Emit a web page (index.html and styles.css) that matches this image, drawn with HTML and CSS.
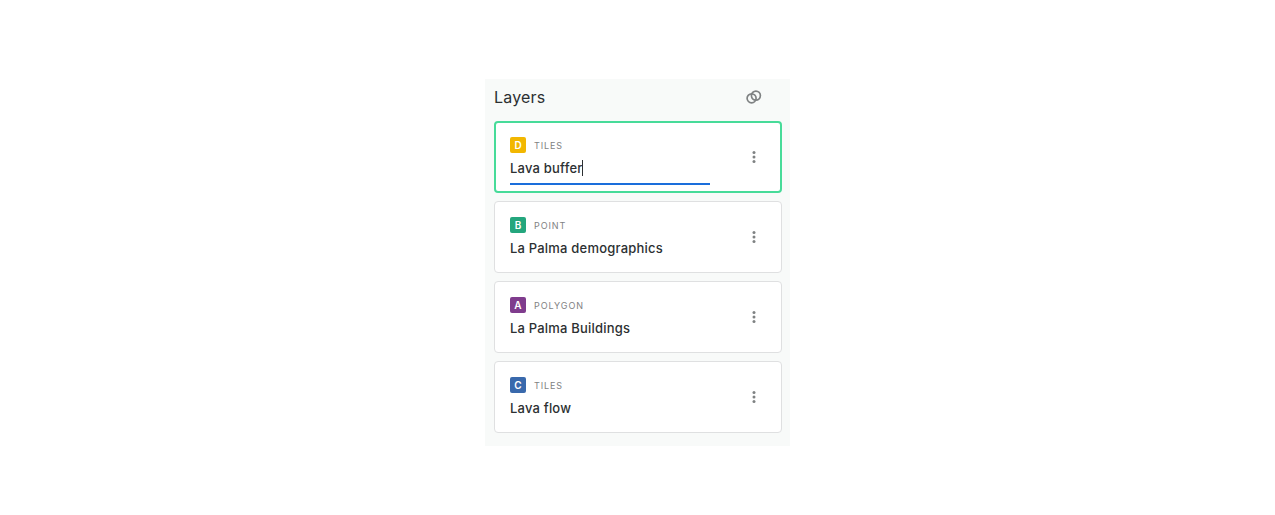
FILE: index.html
```
<!DOCTYPE html>
<html lang="en">
<head>
<meta charset="utf-8">
<title>Layers</title>
<link rel="stylesheet" href="styles.css">
</head>
<body>
<section class="panel">
  <header class="panel-header">
    <h1 class="panel-title">Layers</h1>
    <button class="icon-button" type="button" aria-label="Blending">
      <svg width="16" height="16" viewBox="0 0 16 16" fill="none" stroke="currentColor" stroke-width="1.7"><circle cx="5.6" cy="9.3" r="4.5"/><circle cx="9.9" cy="6.6" r="4.5"/></svg>
    </button>
  </header>
  <ul class="layers">
    <li class="layer layer-active">
      <div class="layer-body">
        <div class="layer-meta"><span class="badge badge-d">D</span><label class="kind" for="layer-name">TILES</label></div>
        <div class="field">
          <input class="name name-input" id="layer-name" type="text" value="Lava buffer">
          <span class="caret" aria-hidden="true"></span>
        </div>
      </div>
      <button class="icon-button" type="button" aria-label="Lava buffer options"><svg width="16" height="16" viewBox="0 0 16 16" fill="currentColor"><circle cx="8" cy="3.6" r="1.5"/><circle cx="8" cy="8" r="1.5"/><circle cx="8" cy="12.4" r="1.5"/></svg></button>
    </li>
    <li class="layer">
      <div class="layer-body">
        <div class="layer-meta"><span class="badge badge-b">B</span><span class="kind">POINT</span></div>
        <div class="name">La Palma demographics</div>
      </div>
      <button class="icon-button" type="button" aria-label="La Palma demographics options"><svg width="16" height="16" viewBox="0 0 16 16" fill="currentColor"><circle cx="8" cy="3.6" r="1.5"/><circle cx="8" cy="8" r="1.5"/><circle cx="8" cy="12.4" r="1.5"/></svg></button>
    </li>
    <li class="layer">
      <div class="layer-body">
        <div class="layer-meta"><span class="badge badge-a">A</span><span class="kind">POLYGON</span></div>
        <div class="name">La Palma Buildings</div>
      </div>
      <button class="icon-button" type="button" aria-label="La Palma Buildings options"><svg width="16" height="16" viewBox="0 0 16 16" fill="currentColor"><circle cx="8" cy="3.6" r="1.5"/><circle cx="8" cy="8" r="1.5"/><circle cx="8" cy="12.4" r="1.5"/></svg></button>
    </li>
    <li class="layer">
      <div class="layer-body">
        <div class="layer-meta"><span class="badge badge-c">C</span><span class="kind">TILES</span></div>
        <div class="name">Lava flow</div>
      </div>
      <button class="icon-button" type="button" aria-label="Lava flow options"><svg width="16" height="16" viewBox="0 0 16 16" fill="currentColor"><circle cx="8" cy="3.6" r="1.5"/><circle cx="8" cy="8" r="1.5"/><circle cx="8" cy="12.4" r="1.5"/></svg></button>
    </li>
  </ul>
</section>
</body>
</html>
```
FILE: styles.css
```
* { box-sizing: border-box; }
body {
  margin: 0;
  padding: 79px 16px 16px;
  background: #fff;
  color: #2c3032;
  font-family: Inter, "Liberation Sans", sans-serif;
}
.panel {
  max-width: 305px;
  margin: 0 auto;
  padding: 6px 8px 13px 9px;
  background: #f8faf9;
}
.panel-header {
  display: flex;
  align-items: center;
  justify-content: space-between;
  padding-right: 16px;
  margin-bottom: 12px;
}
.panel-title {
  margin: 0;
  font-size: 16px;
  line-height: 24px;
  font-weight: 400;
  letter-spacing: 0.2px;
}
.icon-button {
  display: flex;
  align-items: center;
  justify-content: center;
  width: 24px;
  height: 24px;
  padding: 0;
  border: 0;
  background: none;
  color: #7f8283;
}
.layers {
  display: grid;
  gap: 8px;
  margin: 0;
  padding: 0;
  list-style: none;
}
.layer {
  display: flex;
  align-items: center;
  justify-content: space-between;
  padding: 0 15px;
  border: 1px solid #dfe0e1;
  border-radius: 4px;
  background: #fff;
}
.layer-body {
  flex: 0 1 200px;
  padding: 15px 0 11px;
}
.layer-active {
  padding: 0 14px;
  border: 2px solid #47db99;
}
.layer-active .layer-body { padding: 14px 0 6px; }
.layer-meta {
  display: flex;
  align-items: flex-start;
  gap: 8px;
}
.badge {
  width: 16px;
  border-radius: 2px;
  color: #fff;
  font-size: 10px;
  line-height: 16px;
  font-weight: 600;
  text-align: center;
}
.badge-d { background: #f2b701; }
.badge-b { background: #24a67d; }
.badge-a { background: #7f3c8d; }
.badge-c { background: #3969ac; }
.kind {
  color: #7f8283;
  font-size: 9px;
  line-height: 18px;
  letter-spacing: 0.9px;
}
.name {
  font-size: 13px;
  line-height: 26px;
  font-weight: 500;
  letter-spacing: 0.2px;
}
.field { position: relative; }
.name-input {
  display: block;
  width: 100%;
  height: 30px;
  padding: 0 0 2px;
  border: 0;
  border-bottom: 2px solid #1a6edb;
  border-radius: 0;
  outline: 0;
  background: none;
  color: inherit;
  font-family: inherit;
}
.caret {
  position: absolute;
  top: 5px;
  left: 72px;
  width: 1px;
  height: 16px;
  background: #2c3032;
}
```
